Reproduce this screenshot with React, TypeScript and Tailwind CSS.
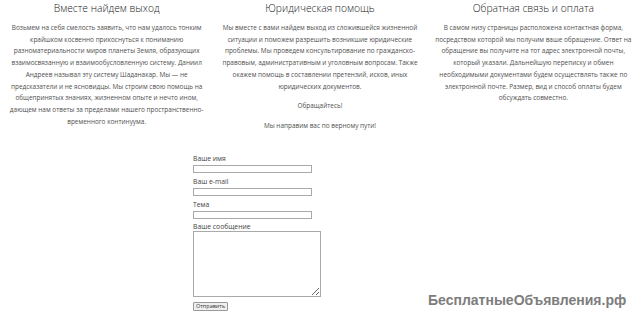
const font = { fontFamily: '"Open Sans", "Noto Sans", sans-serif' };

function Column({ title, children }: { title: string; children: React.ReactNode }) {
  return (
    <div className="flex flex-col items-center px-[5px] text-center">
      <h2 className="text-[10.3px] leading-[14px] font-light text-[#222] mt-[1px]">{title}</h2>
      <div className="mt-[7px] text-[6.45px] leading-[11.7px] text-[#505050] flex flex-col gap-[8px]">{children}</div>
    </div>
  );
}

function Field({ label }: { label: string }) {
  return (
    <div className="flex flex-col mb-[3px]">
      <label className="text-[6.8px] leading-[11px] text-[#444]">{label}</label>
      <input className="mt-[1px] w-[119px] h-[8px] border border-[#a9a9a9] bg-white" />
    </div>
  );
}

export default function App() {
  return (
    <div className="relative w-[640px] h-[311px] bg-white overflow-hidden" style={font}>
      <div className="grid grid-cols-3">
        <Column title="Вместе найдем выход">
          <p>
            Возьмем на себя смелость заявить, что нам удалось тонким крайшком косвенно прикоснуться к пониманию
            разноматериальности миров планеты Земля, образующих взаимосвязанную и взаимообусловленную систему. Даниил
            Андреев называл эту систему Шаданакар. Мы — не предсказатели и не ясновидцы. Мы строим свою помощь на
            общепринятых знаниях, жизненном опыте и нечто ином, дающем нам ответы за пределами нашего
            пространственно-временного континуума.
          </p>
        </Column>
        <Column title="Юридическая помощь">
          <p>
            Мы вместе с вами найдем выход из сложившейся жизненной ситуации и поможем разрешить возникшие юридические
            проблемы. Мы проведем консультирование по гражданско-правовым, административным и уголовным вопросам. Также
            окажем помощь в составлении претензий, исков, иных юридических документов.
          </p>
          <p>Обращайтесь!</p>
          <p>Мы направим вас по верному пути!</p>
        </Column>
        <Column title="Обратная связь и оплата">
          <p>
            В самом низу страницы расположена контактная форма, посредством которой мы получим ваше обращение. Ответ на
            обращение вы получите на тот адрес электронной почты, который указали. Дальнейшую переписку и обмен
            необходимыми документами будем осуществлять также по электронной почте. Размер, вид и способ оплаты будем
            обсуждать совместно.
          </p>
        </Column>
      </div>

      <form className="ml-[193px] mt-[21px] flex flex-col leading-none">
        <Field label="Ваше имя" />
        <Field label="Ваш e-mail" />
        <Field label="Тема" />
        <div className="flex flex-col">
          <label className="text-[6.8px] leading-[9px] text-[#444]">Ваше сообщение</label>
          <textarea className="w-[128px] h-[66px] border border-[#a9a9a9] bg-white resize" />
        </div>
        <div className="mt-[5.5px] flex">
          <button
            type="button"
            className="h-[8.5px] px-[2px] text-[5.5px] leading-[6px] text-[#333] border border-[#999] rounded-[1px] bg-[#efefef]"
          >
            Отправить
          </button>
        </div>
      </form>

      <div
        className="absolute left-[428px] top-[290px] text-[14px] font-bold text-[#7d7d7d]"
        style={{ fontFamily: '"Liberation Sans", Arial, sans-serif' }}
      >
        БесплатныеОбъявления.рф
      </div>
    </div>
  );
}
